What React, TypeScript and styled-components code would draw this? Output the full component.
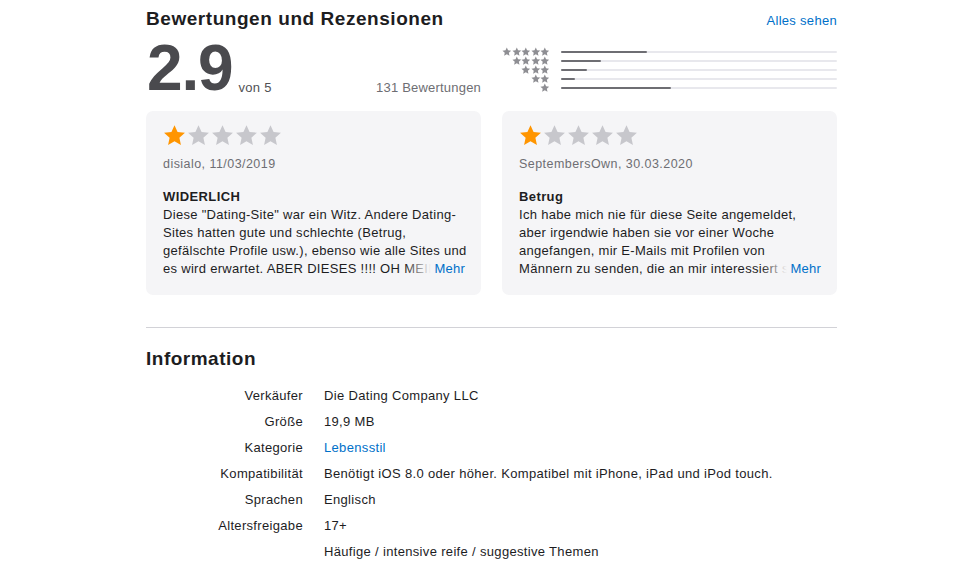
import React from "react";
import styled, { createGlobalStyle } from "styled-components";

const Global = createGlobalStyle`
  html, body { margin: 0; padding: 0; background: #fff; }
  body { font-family: "Liberation Sans", Arial, sans-serif; color: #1d1d1f; -webkit-font-smoothing: antialiased; }
`;

const Page = styled.div`
  width: 691px;
  padding: 5px 0 0 146px;
`;

const SectionHeader = styled.div`
  display: flex;
  justify-content: space-between;
  align-items: baseline;
  height: 28px;
`;

const SectionTitle = styled.h2`
  margin: 0;
  font-size: 19px;
  font-weight: 700;
  letter-spacing: 0.55px;
  color: #1d1d1f;
  line-height: 28px;
`;

const Link = styled.a`
  color: #0070c9;
  font-size: 13px;
  letter-spacing: 0.3px;
  text-decoration: none;
`;

const SummaryRow = styled.div`
  display: grid;
  grid-template-columns: 335px 335px;
  column-gap: 21px;
  height: 63px;
`;

const Score = styled.div`
  display: flex;
  align-items: flex-end;
`;

const BigNum = styled.span`
  font-size: 64px;
  font-weight: 700;
  color: #4a4a4e;
  letter-spacing: -1.2px;
  line-height: 56px;
  margin-left: 1px;
`;

const OutOf = styled.span`
  font-size: 13px;
  color: #515154;
  margin-left: 6px;
  margin-bottom: 1px;
  letter-spacing: 0.3px;
`;

const Count = styled.span`
  margin-left: auto;
  font-size: 13px;
  color: #6e6e73;
  margin-bottom: 1px;
  letter-spacing: 0.2px;
`;

const Histogram = styled.div`
  display: flex;
  flex-direction: column;
  gap: 1px;
  padding-top: 14px;
`;

const HistRow = styled.div`
  display: grid;
  grid-template-columns: 48px 1fr;
  column-gap: 11px;
  align-items: center;
  height: 8px;
`;

const SmallStars = styled.div`
  display: flex;
  justify-content: flex-end;
`;

const Track = styled.div`
  height: 2px;
  background: #e8e8ed;
  border-radius: 1px;
`;

const Fill = styled.div`
  height: 2px;
  background: #6e6e73;
  border-radius: 1px;
`;

const Cards = styled.div`
  display: grid;
  grid-template-columns: 335px 335px;
  column-gap: 21px;
  margin-top: 15px;
`;

const Card = styled.div`
  background: #f5f5f7;
  border-radius: 7px;
  height: 184px;
  padding: 13px 14px 0 17px;
  box-sizing: border-box;
`;

const BigStars = styled.div`
  display: flex;
  gap: 1px;
  height: 24px;
`;

const Author = styled.div`
  margin-top: 8px;
  font-size: 12.5px;
  color: #6e6e73;
  letter-spacing: 0.45px;
  line-height: 16px;
`;

const ReviewTitle = styled.div`
  margin-top: 16px;
  font-size: 13px;
  font-weight: 700;
  letter-spacing: 0.4px;
  line-height: 18px;
  color: #1d1d1f;
`;

const Body = styled.div`
  position: relative;
  font-size: 13px;
  line-height: 18px;
  height: 72px;
  overflow: hidden;
  letter-spacing: 0.3px;
  color: #1d1d1f;
`;

const Line = styled.div`
  white-space: nowrap;
  overflow: hidden;
`;

const More = styled.span`
  position: absolute;
  right: 0;
  bottom: 0;
  line-height: 18px;
  padding: 0 2px 0 30px;
  background: linear-gradient(to right, rgba(245,245,247,0) 0, #f5f5f7 26px);
  color: #0070c9;
  font-size: 13px;
  letter-spacing: 0.2px;
`;

const Divider = styled.hr`
  border: none;
  border-top: 1px solid #d2d2d7;
  margin: 32px 0 0 0;
`;

const InfoTitle = styled(SectionTitle)`
  margin-top: 17px;
  letter-spacing: 0.5px;
`;

const InfoGrid = styled.dl`
  display: grid;
  grid-template-columns: 157px 1fr;
  column-gap: 21px;
  margin: 10px 0 0 0;
  font-size: 13px;
  line-height: 26px;
  letter-spacing: 0.33px;
`;

const Label = styled.dt`
  text-align: right;
  color: #1d1d1f;
`;

const Value = styled.dd`
  margin: 0;
  color: #1d1d1f;
`;

const InfoLink = styled.a`
  color: #0070c9;
  text-decoration: none;
`;

const starPath =
  "M12 1.2l3.2 7.1 7.7.8-5.8 5.2 1.6 7.6L12 18l-6.7 3.9 1.6-7.6L1.1 9.1l7.7-.8z";

function Star({ size, color }: { size: number; color: string }) {
  return (
    <svg width={size} height={size} viewBox="0 0 24 24">
      <path d={starPath} fill={color} />
    </svg>
  );
}

const hist = [31, 14.5, 9.4, 5, 40];

function Review({ author, title, lines }: { author: string; title: string; lines: string[] }) {
  return (
    <Card>
      <BigStars>
        {[0, 1, 2, 3, 4].map((i) => (
          <Star key={i} size={23} color={i === 0 ? "#ff9500" : "#c7c7cc"} />
        ))}
      </BigStars>
      <Author>{author}</Author>
      <ReviewTitle>{title}</ReviewTitle>
      <Body>
        {lines.map((l, i) => (
          <Line key={i}>{l}</Line>
        ))}
        <More>Mehr</More>
      </Body>
    </Card>
  );
}

export default function App() {
  return (
    <>
      <Global />
      <Page>
        <SectionHeader>
          <SectionTitle>Bewertungen und Rezensionen</SectionTitle>
          <Link>Alles sehen</Link>
        </SectionHeader>
        <SummaryRow>
          <Score>
            <BigNum>2.9</BigNum>
            <OutOf>von 5</OutOf>
            <Count>131 Bewertungen</Count>
          </Score>
          <Histogram>
            {hist.map((w, i) => (
              <HistRow key={i}>
                <SmallStars>
                  {Array.from({ length: 5 - i }).map((_, j) => (
                    <Star key={j} size={9.6} color="#8e8e93" />
                  ))}
                </SmallStars>
                <Track>
                  <Fill style={{ width: `${w}%` }} />
                </Track>
              </HistRow>
            ))}
          </Histogram>
        </SummaryRow>
        <Cards>
          <Review
            author="disialo, 11/03/2019"
            title="WIDERLICH"
            lines={[
              'Diese "Dating-Site" war ein Witz. Andere Dating-',
              "Sites hatten gute und schlechte (Betrug,",
              "gefälschte Profile usw.), ebenso wie alle Sites und",
              "es wird erwartet. ABER DIESES !!!! OH MEIN GOTT, das ist wirklich das Schlimmste.",
            ]}
          />
          <Review
            author="SeptembersOwn, 30.03.2020"
            title="Betrug"
            lines={[
              "Ich habe mich nie für diese Seite angemeldet,",
              "aber irgendwie haben sie vor einer Woche",
              "angefangen, mir E-Mails mit Profilen von",
              "Männern zu senden, die an mir interessiert sind. Das ist Betrug.",
            ]}
          />
        </Cards>
        <Divider />
        <InfoTitle>Information</InfoTitle>
        <InfoGrid>
          <Label>Verkäufer</Label>
          <Value>Die Dating Company LLC</Value>
          <Label>Größe</Label>
          <Value>19,9 MB</Value>
          <Label>Kategorie</Label>
          <Value>
            <InfoLink>Lebensstil</InfoLink>
          </Value>
          <Label>Kompatibilität</Label>
          <Value>Benötigt iOS 8.0 oder höher. Kompatibel mit iPhone, iPad und iPod touch.</Value>
          <Label>Sprachen</Label>
          <Value>Englisch</Value>
          <Label>Altersfreigabe</Label>
          <Value>17+</Value>
          <Label></Label>
          <Value>Häufige / intensive reife / suggestive Themen</Value>
        </InfoGrid>
      </Page>
    </>
  );
}
